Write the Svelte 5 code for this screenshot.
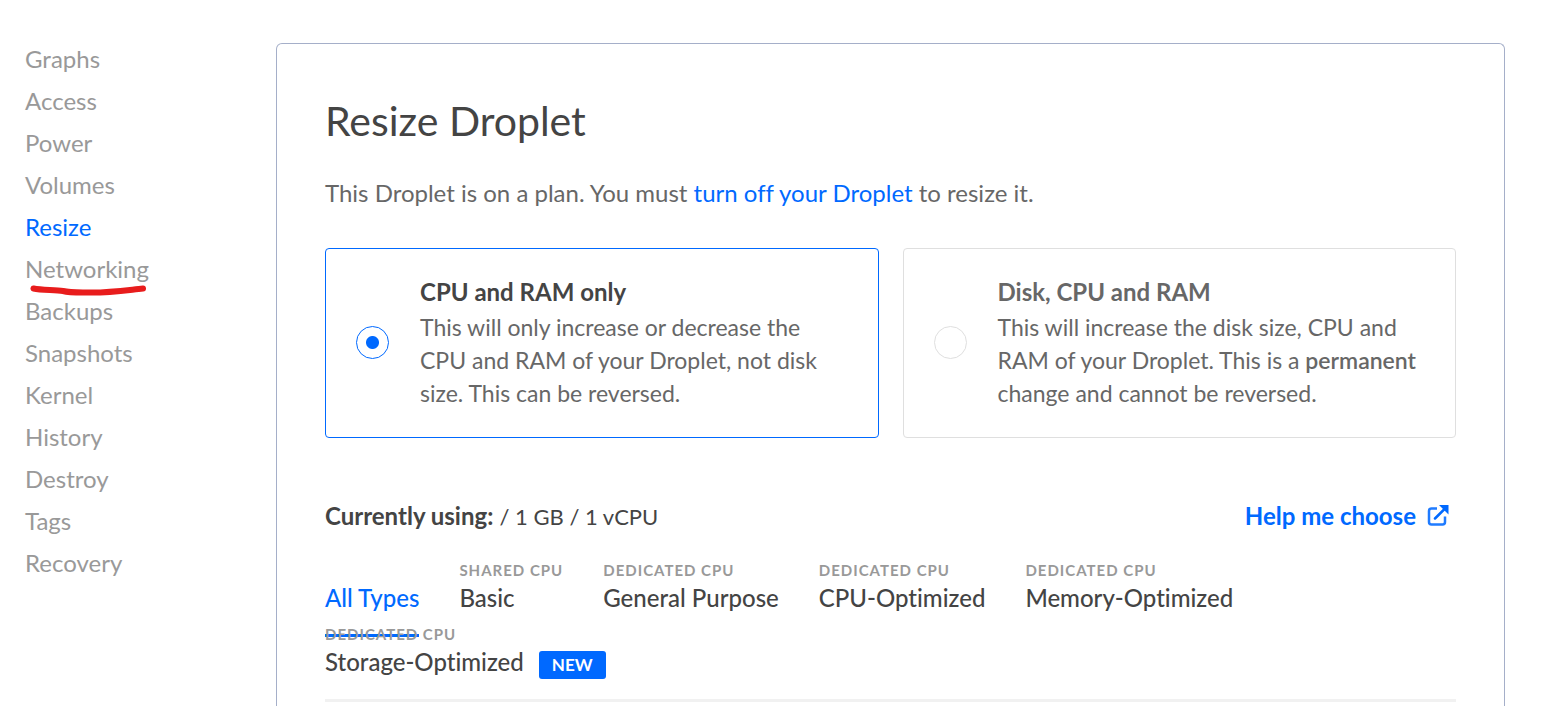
<script>
  const links = [
    'Graphs', 'Access', 'Power', 'Volumes', 'Resize', 'Networking', 'Backups',
    'Snapshots', 'Kernel', 'History', 'Destroy', 'Tags', 'Recovery'
  ];

  const tabs = [
    { kind: '', name: 'All Types' },
    { kind: 'Shared CPU', name: 'Basic' },
    { kind: 'Dedicated CPU', name: 'General Purpose' },
    { kind: 'Dedicated CPU', name: 'CPU-Optimized' },
    { kind: 'Dedicated CPU', name: 'Memory-Optimized' },
    { kind: 'Dedicated CPU', name: 'Storage-Optimized', isNew: true }
  ];

  let page = $state('Resize');
  let mode = $state('cpu');
  let type = $state('All Types');
</script>

<div class="layout">
  <nav class="sidebar">
    {#each links as link}
      <a href="#{link.toLowerCase()}" class:active={page === link} onclick={() => (page = link)}>
        {link}
        {#if link === 'Networking'}
          <svg class="marker" viewBox="0 0 118 12" aria-hidden="true">
            <path d="M3.500 3.500C12 5.500 25 4.500 33 6C40 8 48 7.500 62 7.500C82 7.500 98 5 113 3.500" />
          </svg>
        {/if}
      </a>
    {/each}
  </nav>

  <main class="panel">
    <h1>Resize Droplet</h1>
    <p class="intro">This Droplet is on a plan. You must <a href="#power">turn off your Droplet</a> to resize it.</p>

    <div class="options">
      <label class="option" class:selected={mode === 'cpu'}>
        <input type="radio" name="mode" value="cpu" bind:group={mode} />
        <span class="copy">
          <strong class="title">CPU and RAM only</strong>
          <span>This will only increase or decrease the CPU and RAM of your Droplet, not disk size. This can be reversed.</span>
        </span>
      </label>
      <label class="option" class:selected={mode === 'disk'}>
        <input type="radio" name="mode" value="disk" bind:group={mode} />
        <span class="copy">
          <strong class="title">Disk, CPU and RAM</strong>
          <span>This will increase the disk size, CPU and RAM of your Droplet. This is a <b>permanent</b> change and cannot be reversed.</span>
        </span>
      </label>
    </div>

    <div class="current">
      <p><strong>Currently using:</strong> <span class="plan">/ 1 GB / 1 vCPU</span></p>
      <a class="help" href="#help">
        Help me choose
        <svg viewBox="0 0 24 24" aria-hidden="true">
          <path class="line" d="M11 4.500H5.500Q3 4.500 3 7V18Q3 20.500 5.500 20.500H16.500Q19 20.500 19 18V12.500" />
          <path class="arrow" d="M9 14.500L19 4.500" />
          <path class="head" d="M13 1H22.500V10.500Z" />
        </svg>
      </a>
    </div>

    <div class="tabs" role="tablist">
      {#each tabs as tab}
        <button role="tab" aria-selected={type === tab.name} class:active={type === tab.name} onclick={() => (type = tab.name)}>
          <span class="kind">{tab.kind}</span>
          <span class="name">{tab.name}{#if tab.isNew}<span class="badge">NEW</span>{/if}</span>
        </button>
      {/each}
    </div>
  </main>
</div>

<style>
  :global(body) {
    margin: 0;
    background: #fff;
  }

  .layout {
    display: flex;
    box-sizing: border-box;
    min-height: 100vh;
    padding: 43px 49px 0 25px;
    color: #676767;
    font-family: Lato, sans-serif;
    font-size: 24px;
    font-variant-ligatures: none;
    line-height: 34px;
  }

  a {
    color: #0069ff;
    text-decoration: none;
  }

  .sidebar {
    display: flex;
    flex: 0 0 251px;
    flex-direction: column;
    align-items: flex-start;
    gap: 10px;
    line-height: 32px;
  }

  .sidebar a {
    position: relative;
    color: #999;
  }

  .sidebar a.active {
    color: #0069ff;
  }

  .marker {
    position: absolute;
    top: 32px;
    left: 5px;
    width: 118px;
    height: 12px;
    fill: none;
    stroke: #e81c1c;
    stroke-width: 6;
    stroke-linecap: round;
  }

  .panel {
    flex: 1;
    min-width: 0;
    padding: 48px 48px 0;
    border: 1px solid #a5afc9;
    border-bottom: 0;
    border-radius: 6px 6px 0 0;
  }

  h1 {
    margin: 0 0 26px;
    color: #444;
    font-size: 41px;
    font-weight: 400;
    line-height: 58px;
  }

  p {
    margin: 0;
  }

  .intro {
    margin-bottom: 38px;
  }

  .options {
    display: grid;
    grid-template-columns: 1fr 1fr;
    gap: 24px;
    margin-bottom: 61px;
  }

  .option {
    display: flex;
    align-items: center;
    gap: 31px;
    padding: 26px 34px 27px 30px;
    border: 1px solid #dfdfdf;
    border-radius: 4px;
    cursor: pointer;
  }

  .option.selected {
    border-color: #0069ff;
  }

  .option input {
    flex: none;
    width: 33px;
    height: 33px;
    margin: 0;
    appearance: none;
    border: 1px solid #dfdfdf;
    border-radius: 50%;
  }

  .option input:checked {
    border-color: #0069ff;
    background: radial-gradient(circle, #0069ff 6px, transparent 7px);
  }

  .copy {
    display: flex;
    flex-direction: column;
    gap: 3px;
    font-size: 23px;
    line-height: 33px;
  }

  .copy b {
    font-weight: 600;
  }

  .title {
    font-size: 24px;
    font-weight: 700;
  }

  .selected .title {
    color: #444;
  }

  .current {
    display: flex;
    justify-content: space-between;
    margin-bottom: 26px;
    color: #444;
  }

  .plan {
    font-size: 22px;
    line-height: 24px;
  }

  .help {
    display: flex;
    align-items: center;
    gap: 10px;
    margin-right: 6px;
    font-weight: 700;
  }

  .help svg {
    width: 24px;
    height: 24px;
  }

  .line,
  .arrow {
    fill: none;
    stroke: #1f7bff;
    stroke-width: 2.5;
  }

  .arrow {
    stroke: #0069ff;
    stroke-linecap: round;
  }

  .head {
    fill: #0069ff;
  }

  .tabs {
    display: flex;
    flex-wrap: wrap;
    column-gap: 40px;
    padding-bottom: 12px;
    border-bottom: 3px solid #f1f1f1;
  }

  .tabs button {
    position: relative;
    display: flex;
    flex-direction: column;
    padding: 0 0 8px;
    border: 0;
    background: none;
    color: #444;
    font: inherit;
    font-variant-ligatures: none;
    font-weight: 500;
    text-align: left;
    cursor: pointer;
  }

  .tabs button.active {
    color: #0069ff;
  }

  .tabs button.active::after {
    position: absolute;
    right: 0;
    bottom: -14px;
    left: 0;
    height: 3px;
    background: #0069ff;
    content: '';
  }

  .kind {
    height: 22px;
    color: #999;
    font-size: 15px;
    font-weight: 700;
    letter-spacing: 1px;
    line-height: 22px;
    text-transform: uppercase;
  }

  .name {
    display: flex;
    align-items: flex-end;
    gap: 15px;
    height: 34px;
  }

  .badge {
    padding: 0 13px;
    border-radius: 3px;
    background: #0069ff;
    color: #fff;
    font-size: 17px;
    font-weight: 700;
    line-height: 28px;
  }
</style>
